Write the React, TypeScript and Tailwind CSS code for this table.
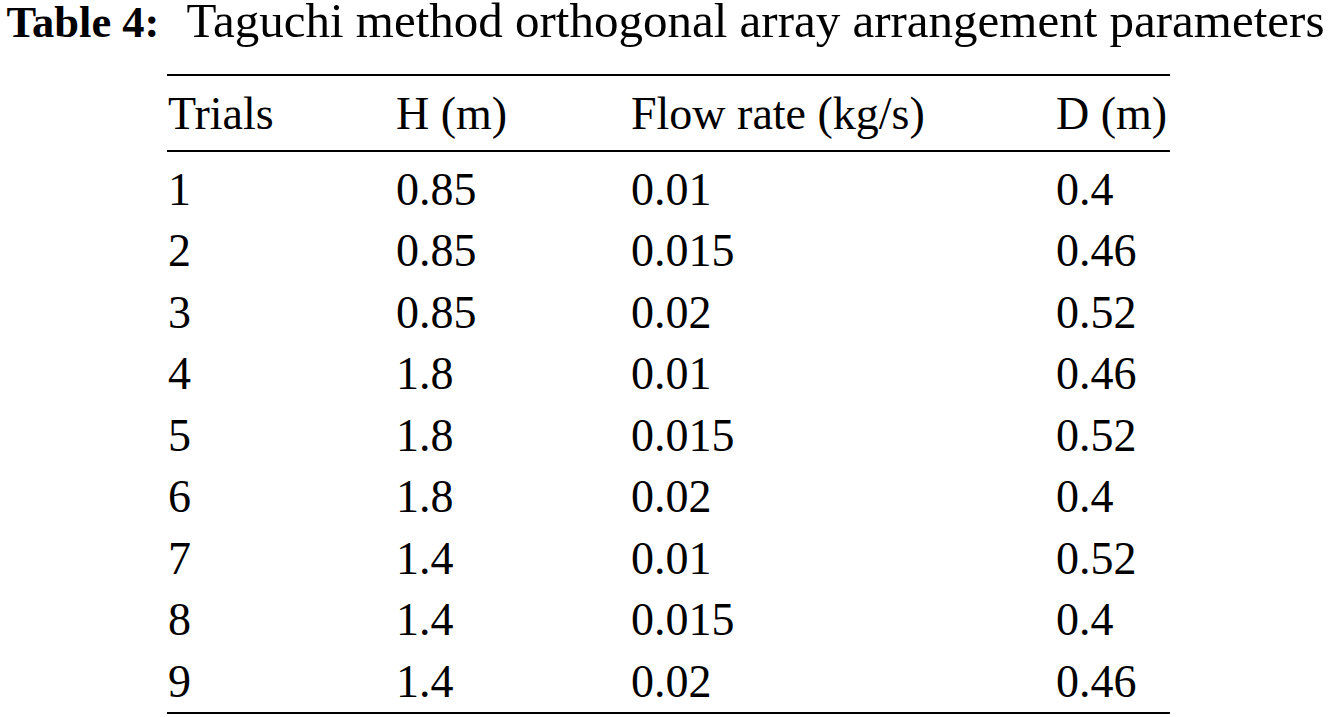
const rows = [
  ['1', '0.85', '0.01', '0.4'],
  ['2', '0.85', '0.015', '0.46'],
  ['3', '0.85', '0.02', '0.52'],
  ['4', '1.8', '0.01', '0.46'],
  ['5', '1.8', '0.015', '0.52'],
  ['6', '1.8', '0.02', '0.4'],
  ['7', '1.4', '0.01', '0.52'],
  ['8', '1.4', '0.015', '0.4'],
  ['9', '1.4', '0.02', '0.46'],
];

const cols = 'grid grid-cols-[228px_235px_425px_115px]';

export default function App() {
  return (
    <div className="min-h-screen bg-white text-black font-[family-name:'Liberation_Serif','Times_New_Roman',serif] text-[46px]">
      <div className="flex items-baseline justify-center pl-[2px] leading-[42px] whitespace-nowrap">
        <span className="font-bold text-[44.5px]">Table 4:</span>
        <span className="ml-[27px] text-[49px]">Taguchi method orthogonal array arrangement parameters</span>
      </div>

      <div className="ml-[167px] mt-[31px] w-[1003px]">
        <div className="border-t-2 border-b-2 border-black pt-[7px] pb-[5px]">
          <div className={`${cols} leading-[61.5px] pl-px`}>
            <div>Trials</div>
            <div>H (m)</div>
            <div>Flow rate (kg/s)</div>
            <div>D (m)</div>
          </div>
        </div>
        <div className="border-b-2 border-black pt-[7px]">
          {rows.map((r) => (
            <div key={r[0]} className={`${cols} leading-[61.5px] pl-px`}>
              {r.map((c, i) => (
                <div key={i}>{c}</div>
              ))}
            </div>
          ))}
        </div>
      </div>
    </div>
  );
}
